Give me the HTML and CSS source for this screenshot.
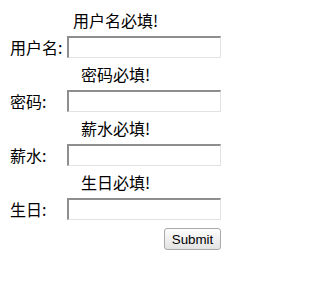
FILE: index.html
```html
<!DOCTYPE html>
<html>
<head>
<meta charset="utf-8">
<link rel="stylesheet" href="styles.css">
</head>
<body>
<form class="form">
  <div class="err">用户名必填!</div>
  <label class="label">用户名:</label><input type="text" class="field">
  <div class="err">密码必填!</div>
  <label class="label">密码:</label><input type="text" class="field">
  <div class="err">薪水必填!</div>
  <label class="label">薪水:</label><input type="text" class="field">
  <div class="err">生日必填!</div>
  <label class="label">生日:</label><input type="text" class="field">
  <div class="actions"><button type="button" class="submit">Submit</button></div>
</form>
</body>
</html>
```
FILE: styles.css
```css
body {
  margin: 0;
  font-family: "Noto Sans CJK SC", sans-serif;
  font-size: 16px;
  color: #000;
  background: #fff;
}
.form {
  display: grid;
  grid-template-columns: 57px 154px;
  grid-auto-rows: auto;
  row-gap: 5px;
  margin: 9px 0 0 10px;
  width: 211px;
}
.err {
  grid-column: 1 / 3;
  text-align: center;
  height: 22px;
  line-height: 22px;
}
.label {
  height: 22px;
  line-height: 22px;
}
.field {
  box-sizing: border-box;
  width: 154px;
  height: 22px;
  margin: 0;
  padding: 1px 2px;
  border-style: solid;
  border-width: 2px 1px 1px 2px;
  border-color: #8e8e8e #e2e2e2 #e2e2e2 #8e8e8e;
  background: #fff;
  font-family: "Liberation Sans", Arial, sans-serif;
  font-size: 13.333px;
}
.actions {
  grid-column: 1 / 3;
  display: flex;
  justify-content: flex-end;
  margin-top: 3px;
}
.submit {
  box-sizing: border-box;
  height: 22px;
  width: 57px;
  margin: 0;
  padding: 0 6px;
  font-family: "Liberation Sans", Arial, sans-serif;
  font-size: 13.333px;
  color: #000;
  border: 1px solid #a9a9a9;
  border-radius: 3px;
  background: linear-gradient(#fdfdfd, #e3e3e3);
}
```
